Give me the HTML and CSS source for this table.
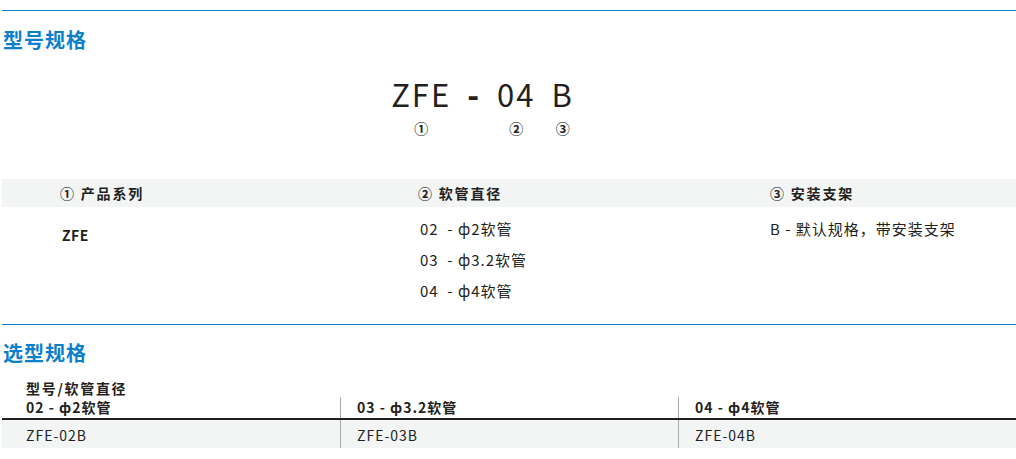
FILE: index.html
```html
<!DOCTYPE html>
<html lang="zh-CN">
<head>
<meta charset="utf-8">
<title>型号规格</title>
<link rel="stylesheet" href="styles.css">
</head>
<body>
<div class="page">
  <section class="sec sec-model">
    <h2 class="sec-title">型号规格</h2>
    <div class="code">
      <div class="seg"><span class="big">ZFE</span><span class="num">①</span></div>
      <div class="seg"><span class="big dash">-</span><span class="num"></span></div>
      <div class="seg"><span class="big">04</span><span class="num">②</span></div>
      <div class="seg"><span class="big">B</span><span class="num">③</span></div>
    </div>
    <div class="spec">
      <div class="spec-head">
        <div class="c1">① 产品系列</div>
        <div class="c2">② 软管直径</div>
        <div class="c3">③ 安装支架</div>
      </div>
      <div class="spec-body">
        <div class="c1 series">ZFE</div>
        <div class="c2">
          <div class="opt">02 &nbsp;- ф2软管</div>
          <div class="opt">03 &nbsp;- ф3.2软管</div>
          <div class="opt">04 &nbsp;- ф4软管</div>
        </div>
        <div class="c3">
          <div class="opt">B - 默认规格，带安装支架</div>
        </div>
      </div>
    </div>
  </section>
  <section class="sec sec-select">
    <h2 class="sec-title">选型规格</h2>
    <div class="caption">型号/软管直径</div>
    <div class="sel-table">
      <div class="sel-row sel-head">
        <div class="cell">02 - ф2软管</div>
        <div class="cell">03 - ф3.2软管</div>
        <div class="cell">04 - ф4软管</div>
      </div>
      <div class="sel-row sel-data">
        <div class="cell">ZFE-02B</div>
        <div class="cell">ZFE-03B</div>
        <div class="cell">ZFE-04B</div>
      </div>
    </div>
  </section>
</div>
</body>
</html>
```
FILE: styles.css
```css
* { box-sizing: border-box; }
html, body { margin: 0; padding: 0; background: #fff; }
body {
  font-family: "Noto Sans CJK SC", "Noto Sans", sans-serif;
  color: #231f20;
  font-size: 14px;
}
.page { padding: 10px 0 0 2px; }
.sec { border-top: 1px solid #0a7fcc; }
.sec-title {
  margin: 15px 0 0 1px;
  font-size: 20px;
  line-height: 28px;
  font-weight: 700;
  color: #0a7fcc;
  letter-spacing: 1px;
}
.code {
  display: flex;
  justify-content: center;
  gap: 16px;
  margin-top: 20px;
  padding-right: 53px;
}
.seg { display: flex; flex-direction: column; align-items: center; }
.big {
  font-size: 31px;
  line-height: 40px;
  letter-spacing: 2px;
  font-weight: 400;
}
.dash { font-weight: 900; }
.num {
  margin-top: 4px;
  height: 20px;
  font-size: 14px;
  line-height: 20px;
  font-weight: 700;
}
.spec { margin-top: 41px; }
.spec-head, .spec-body {
  display: grid;
  grid-template-columns: 358px 352px 1fr;
  padding-left: 58px;
}
.spec-head {
  background: #f3f5f5;
  height: 28px;
  line-height: 28px;
  font-weight: 700;
  font-size: 14px;
  letter-spacing: 1.8px;
}
.spec-body { padding-top: 6px; padding-bottom: 18px; }
.spec-body .c2 { padding-left: 2px; }
.opt { font-size: 15px; line-height: 31px; letter-spacing: 1px; }
.series {
  font-weight: 700;
  font-size: 14px;
  line-height: 31px;
  margin-top: 7px;
  padding-left: 2px;
  letter-spacing: 0.5px;
}
.sec-select .sec-title { margin-top: 14px; }
.caption {
  margin: 12px 0 0 24px;
  font-weight: 700;
  font-size: 14px;
  line-height: 18px;
  letter-spacing: 1.7px;
}
.sel-row {
  display: grid;
  grid-template-columns: repeat(3, 1fr);
}
.sel-head {
  height: 23px;
  border-bottom: 2px solid #231f20;
  font-weight: 700;
  font-size: 14px;
  letter-spacing: 1px;
}
.sel-head .cell { line-height: 21px; }
.sel-data {
  background: #f3f5f5;
  height: 28px;
  font-size: 14px;
  letter-spacing: 1px;
}
.sel-data .cell { line-height: 30px; }
.cell { padding-left: 16px; border-left: 1px solid #a7a9ac; }
.cell:first-child { border-left: none; padding-left: 24px; }
```
